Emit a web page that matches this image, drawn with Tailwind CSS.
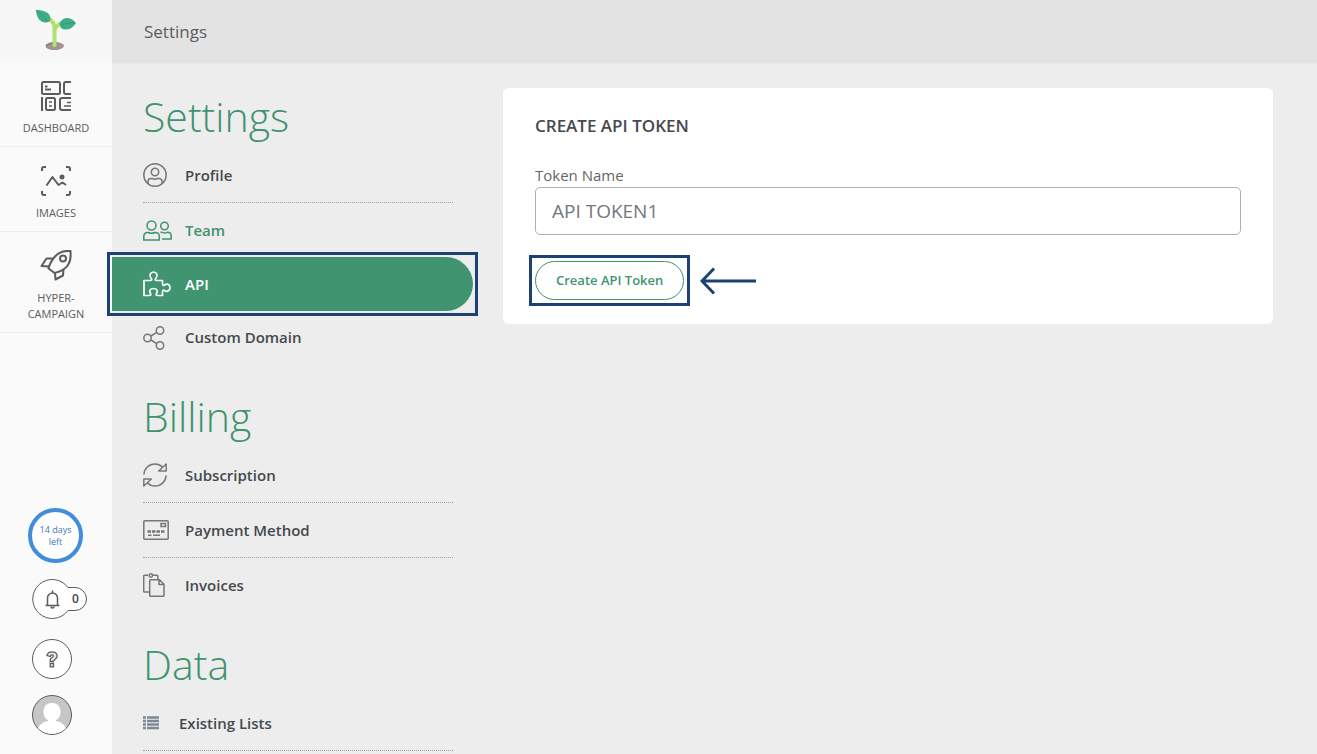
<!DOCTYPE html>
<html lang="en">
  <head>
    <meta charset="UTF-8" />
    <meta name="viewport" content="width=device-width, initial-scale=1.0" />
    <title>Settings - API</title>
    <script src="https://cdn.jsdelivr.net/npm/@tailwindcss/browser@4"></script>
  </head>
  <body class="flex h-screen overflow-hidden bg-[#ededed] font-['Open_Sans',sans-serif] text-[#45494d]">
    <!-- Sidebar -->
    <aside class="flex w-28 shrink-0 flex-col bg-[#fafafa] text-[#5c5c5c]">
      <a href="#" aria-label="Home" class="flex h-[61px] justify-center bg-[#f7f7f7] pt-2">
        <svg class="h-11 w-11" viewBox="0 0 44 44" fill="none" aria-hidden="true">
          <ellipse cx="20.500" cy="38" rx="9" ry="4" fill="#8d7f79" />
          <path d="M12 39c3-3 12-5 17-3a9 4 0 0 1-3 5c-5 1.500-12 .5-14-2Z" fill="#a3958d" />
          <path d="M13 10c5 2 8 6 7.500 12M29 15c-5 1-8 4-8.500 8v14" stroke="#b4e070" stroke-width="4" stroke-linecap="round" />
          <path d="M2 2c8-.5 15 3 14.500 9.500-.3 2-3 3.500-6 3C5 13.500 2.500 9 2 2Z" fill="#3fae84" />
          <path d="M2 2c4 3 8 7 11 11" stroke="#34997a" stroke-width="1" />
          <path d="M25.500 16.500c.5-4 4-6.500 8-6.500 3.500 0 6.500 2.500 8.500 5-3 4.500-6 6.500-10.500 6.500-3.500 0-5.500-2-6-5Z" fill="#3fae84" />
          <path d="M27 16.500c5-1 9-1.500 14-1.500" stroke="#34997a" stroke-width="1" />
        </svg>
      </a>
      <nav class="text-[11px] leading-4">
        <a href="#" class="flex flex-col items-center gap-2 border-b border-[#eeeeee] pt-[19px] pb-2.5">
          <svg class="h-8 w-8" viewBox="0 0 32 32" fill="none" stroke="#5c5c5c" stroke-width="2" aria-hidden="true">
            <rect x="2" y="2" width="18" height="12" rx="1.500" />
            <path d="M31 2h-5a2 2 0 0 0-2 2v8a2 2 0 0 0 2 2h5M2 17v14M31 18H22a2 2 0 0 0-2 2v8a2 2 0 0 0 2 2h9M5 6.500h2.500M5 9.500h6" />
            <rect x="6" y="18" width="9" height="12" rx="1.500" />
            <path d="M9 22h3M9 26h3M27 22.500h4M24 26h7" stroke-width="1.500" />
          </svg>
          DASHBOARD
        </a>
        <a href="#" class="flex flex-col items-center gap-2 border-b border-[#eeeeee] pt-[18px] pb-2.5">
          <svg class="h-8 w-8" viewBox="0 0 32 32" fill="none" stroke="#5c5c5c" stroke-width="2" aria-hidden="true">
            <path d="M2 6V4a2 2 0 0 1 2-2h2M26 2h2a2 2 0 0 1 2 2v2M30 26v2a2 2 0 0 1-2 2h-2M6 30H4a2 2 0 0 1-2-2v-2" />
            <path d="m6.500 20.500 6-8.500 6 8 4-2.500 3.500 2.500" stroke-linejoin="round" />
            <circle cx="22" cy="12" r="1.500" fill="#5c5c5c" />
          </svg>
          IMAGES
        </a>
        <a href="#" class="flex flex-col items-center gap-2 border-b border-[#eeeeee] pt-[18px] pb-2.5 text-center">
          <svg class="h-8 w-8" viewBox="0 0 32 32" fill="none" stroke="#5c5c5c" stroke-width="2" stroke-linejoin="round" aria-hidden="true">
            <path d="M30.500 1C24 .5 19 2 15 6.500 12 10 9.500 14 8.500 18.500L14.500 23c6-1.500 11-4 13.500-8 2.500-4 3-9 2.500-14Z" />
            <circle cx="23" cy="8.500" r="3" />
            <path d="M13 8.500H6.500l-5 7.500 8 .5M23.500 19l-.5 6.500-7.500 4-.5-6.500" />
          </svg>
          <span>HYPER-<br />CAMPAIGN</span>
        </a>
      </nav>

      <div class="mt-auto flex flex-col pb-[19px] pl-7">
        <a href="#" class="flex h-[55px] w-[55px] items-center justify-center rounded-full border-4 border-[#428dd8] bg-white text-center text-[9px] leading-3 text-[#4377b8]">14 days<br />left</a>
        <button type="button" aria-label="Notifications" class="relative mt-4 ml-1 flex h-10 w-[55px] items-center gap-3 pl-[13px] text-xs font-semibold text-[#45454f]">
          <svg class="absolute inset-0" width="55" height="40" viewBox="0 0 55 40" fill="white" stroke="#5c5c5c" aria-hidden="true">
            <path d="M36 8.500A19.500 19.500 0 1 0 36 31.500H43a11.500 11.500 0 0 0 0-23Z" />
          </svg>
          <svg class="relative" width="15" height="19" viewBox="0 0 15 19" fill="none" stroke="#5c5c5c" stroke-width="1.500" aria-hidden="true">
            <path d="M.5 15.500h14M2.500 15.500V8a5 5 0 0 1 10 0v7.500M7.500 3V.5M6 16.500a1.500 1.500 0 0 0 3 0" />
          </svg>
          <span class="relative">0</span>
        </button>
        <button type="button" aria-label="Help" class="mt-5 ml-1 flex h-10 w-10 items-center justify-center rounded-full border border-[#5c5c5c] bg-white">
          <svg width="12" height="17" viewBox="0 0 12 17" fill="#e4e4e4" stroke="#5c5c5c" stroke-width="1.300" aria-hidden="true">
            <path d="M4.200 10.500V8.500C4.200 7 7.300 6.500 7.300 5c0-1.500-2.300-1.500-3 .5L1 4.500C1.500 2 3.500.8 6 .8c3 0 5.200 1.700 5.200 4.200 0 3-3.700 3.200-3.700 5.500Z" />
            <rect x="4.200" y="12.500" width="3.300" height="3.300" />
          </svg>
        </button>
        <button type="button" aria-label="Account" class="mt-4 ml-1 h-10 w-10 overflow-hidden rounded-full border border-[#5c5c5c] bg-[#c6c6c6]">
          <svg class="h-full w-full" viewBox="0 0 38 38" fill="white" aria-hidden="true">
            <rect x="10.500" y="7" width="17" height="18" rx="8" />
            <path d="M15 21h8v4c6 1 9 4 10 8v5H5v-5c1-4 4-7 10-8Z" />
          </svg>
        </button>
      </div>
    </aside>

    <div class="flex min-w-0 grow flex-col">
      <header class="flex h-16 shrink-0 items-center border-b border-[#e8e8e8] bg-[#e3e3e3] px-8 text-[17px] text-[#5c5c5c]">Settings</header>

      <div class="flex items-start">
        <!-- Settings menu -->
        <nav class="w-[391px] shrink-0 pt-5 text-[15px] font-semibold">
          <div class="pr-[50px] pl-[31px]">
            <h1 class="text-[41px] leading-[64px] font-light text-[#3f936f]">Settings</h1>
            <a href="#" class="flex h-[55px] items-center border-b border-dotted border-[#a0a0a0]">
              <span class="w-[42px]">
                <svg width="24" height="24" viewBox="0 0 24 24" fill="none" stroke="#777" stroke-width="1.500" aria-hidden="true">
                  <circle cx="12" cy="12" r="11.200" />
                  <circle cx="12" cy="9" r="3.700" />
                  <path d="M5 20.500V18.500c0-2 1-3 3-3h1.500c1.500.8 3.500.8 5 0H16c2 0 3 1 3 3v2" />
                </svg>
              </span>
              Profile
            </a>
            <a href="#" class="flex h-[54px] items-center text-[#3f936f]">
              <span class="w-[42px]">
                <svg width="29" height="21" viewBox="0 0 29 21" fill="none" stroke="#3f936f" stroke-width="1.500" aria-hidden="true">
                  <circle cx="8.500" cy="5.500" r="4.500" />
                  <path d="M.8 20v-3.500c0-2.500 1.500-4 4-4h.5c2 1 4.500 1 6.500 0h.5c2.500 0 4 1.500 4 4V20Z" />
                  <circle cx="21.500" cy="6" r="3.800" />
                  <path d="M17.500 12.300h1.500c1.500.8 3.500.8 5 0h.5c2.500 0 3.700 1.500 3.700 3.700v3h-9.200" />
                </svg>
              </span>
              Team
            </a>
          </div>

          <div class="relative pr-[30px]">
            <a href="#" class="flex h-[54px] items-center rounded-r-full bg-[#40946f] pl-[31px] text-white">
              <span class="w-[42px]">
                <svg width="28" height="26" viewBox="0 0 28 26" fill="none" stroke="white" stroke-width="1.700" stroke-linejoin="round" aria-hidden="true">
                  <path d="M1 24.500V9.500h6.500c1.500 0 1.500-1 .7-2C5.500 4.500 7.500 1 10.500 1s5 3.500 2.300 6.500c-.8 1-.8 2 .7 2h6v3.500c0 1.500 1 1.700 2 1 3-2 5.500 0 5.500 2.700s-2.500 4.700-5.500 2.800c-1-.7-2-.5-2 1v4h-5c-1.500 0-1.700-1-1-2 2-3 0-5-3-5s-5 2-3 5c.7 1 .5 2-1 2Z" />
                </svg>
              </span>
              API
            </a>
            <div class="pointer-events-none absolute -inset-y-[5px] right-[25px] -left-[5px] border-3 border-[#1b4177]"></div>
          </div>

          <div class="pr-[50px] pl-[31px]">
            <a href="#" class="flex h-[53px] items-center">
              <span class="w-[42px]">
                <svg width="22" height="24" viewBox="0 0 22 24" fill="none" stroke="#777" stroke-width="1.500" aria-hidden="true">
                  <circle cx="4.500" cy="12" r="3.700" />
                  <circle cx="17" cy="4.500" r="3.700" />
                  <circle cx="17" cy="19.500" r="3.700" />
                  <path d="m7.800 10 6-3.600M7.800 14l6 3.600" />
                </svg>
              </span>
              Custom Domain
            </a>

            <h2 class="mt-5 text-[41px] leading-[64px] font-light text-[#3f936f]">Billing</h2>
            <a href="#" class="flex h-[55px] items-center border-b border-dotted border-[#a0a0a0]">
              <span class="w-[42px]">
                <svg width="24" height="24" viewBox="0 0 24 24" fill="none" stroke="#777" stroke-width="1.500" stroke-linejoin="round" aria-hidden="true">
                  <path d="M1 11.500C1 5.500 6 1 12 1c3 0 5.500 1 7.500 3M23 12.500C23 18.500 18 23 12 23c-3 0-5.500-1-7.500-3" />
                  <path d="M23.200 1v7h-7.500ZM.8 23v-7h7.500Z" />
                </svg>
              </span>
              Subscription
            </a>
            <a href="#" class="flex h-[55px] items-center border-b border-dotted border-[#a0a0a0]">
              <span class="w-[42px]">
                <svg width="26" height="20" viewBox="0 0 26 20" fill="none" stroke="#777" stroke-width="1.500" aria-hidden="true">
                  <rect x=".8" y=".8" width="24.400" height="18.400" rx="1" />
                  <rect x="18" y="3.500" width="4.500" height="3" />
                  <path d="M4.500 11.500h17" stroke-width="2.500" stroke-dasharray="3.500 1" />
                  <path d="M5 15.300h3.500M10 15.300h7" />
                </svg>
              </span>
              Payment Method
            </a>
            <a href="#" class="flex h-[54px] items-center">
              <span class="w-[42px]">
                <svg width="22" height="24" viewBox="0 0 22 24" fill="none" stroke="#777" stroke-width="1.500" stroke-linejoin="round" aria-hidden="true">
                  <path d="M6.500 19H1.500a.8.800 0 0 1-.8-.8V3a.8.800 0 0 1 .8-.8H5M10 2.200h4a.8.800 0 0 1 .8.800v3" />
                  <circle cx="7.800" cy="2.500" r="1.700" />
                  <path d="M7.500 6.800h9l4.500 4.500V22.500a.8.800 0 0 1-.8.800H7.500a.8.800 0 0 1-.8-.8v-15a.8.800 0 0 1 .8-.7ZM16 7v4.500h5" />
                </svg>
              </span>
              Invoices
            </a>

            <h2 class="mt-5 text-[41px] leading-[64px] font-light text-[#3f936f]">Data</h2>
            <a href="#" class="flex h-[55px] items-center gap-5 border-b border-dotted border-[#a0a0a0]">
              <svg width="16" height="14" viewBox="0 0 16 14" stroke="#7c8a97" stroke-width="2.500" aria-hidden="true">
                <path d="M0 1.500h3M4 1.500h12M0 5h3M4 5h12M0 8.500h3M4 8.500h12M0 12h3M4 12h12" />
              </svg>
              Existing Lists
            </a>
          </div>
        </nav>

        <main class="min-w-0 grow pt-6 pr-11">
          <form class="rounded-md bg-white px-8 py-6">
            <h3 class="text-[17px] leading-7 font-semibold">CREATE API TOKEN</h3>
            <label for="token-name" class="mt-6 block text-[15px] leading-[23px] text-[#666666]">Token Name</label>
            <input
              type="text"
              id="token-name"
              value="API TOKEN1"
              class="block h-12 w-full rounded-[5px] border border-[#b0b0b0] bg-white px-4 text-[19px] text-[#73777b]"
            />
            <div class="mt-[26px] flex items-center">
              <div class="relative">
                <button type="button" class="block h-[39px] rounded-full border border-[#3f936f] px-5 text-[13px] font-semibold text-[#3f936f]">Create API Token</button>
                <div class="pointer-events-none absolute -inset-1.5 border-3 border-[#1b4177]"></div>
              </div>
              <svg class="ml-4" width="56" height="28" viewBox="0 0 56 28" fill="none" stroke="#1b4177" stroke-width="3" aria-hidden="true">
                <path d="M14 1.500 2 14l12 12.500M2 14h54" />
              </svg>
            </div>
          </form>
        </main>
      </div>
    </div>
  </body>
</html>
